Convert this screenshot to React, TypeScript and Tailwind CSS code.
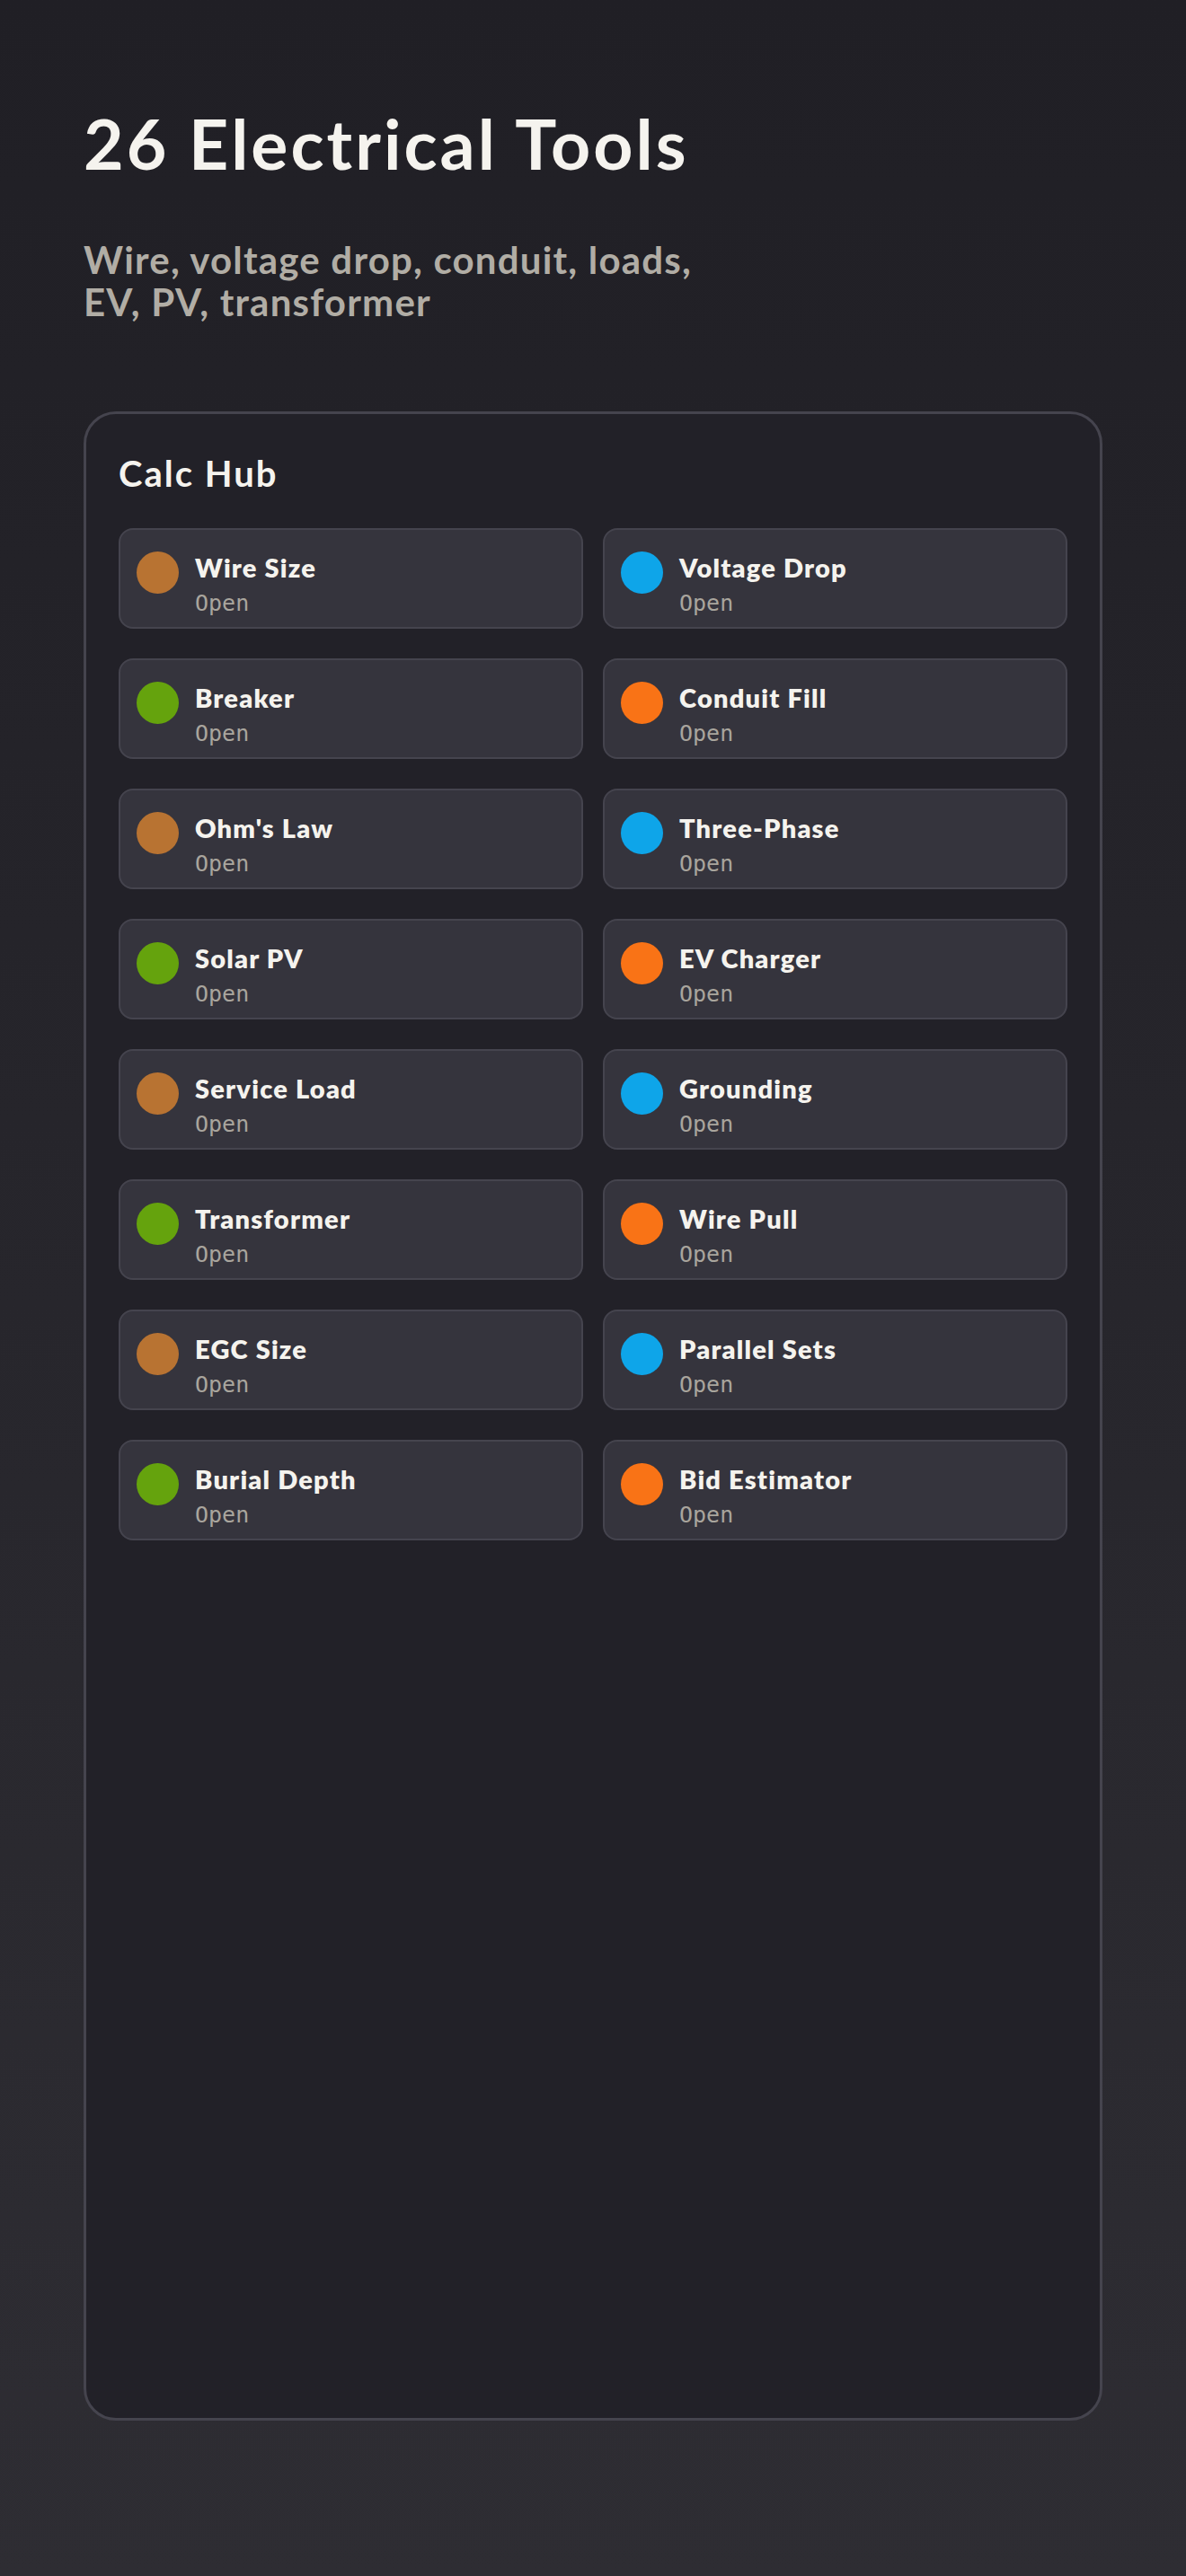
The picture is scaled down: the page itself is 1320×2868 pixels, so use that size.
const tools = [
  'Wire Size',
  'Voltage Drop',
  'Breaker',
  'Conduit Fill',
  "Ohm's Law",
  'Three-Phase',
  'Solar PV',
  'EV Charger',
  'Service Load',
  'Grounding',
  'Transformer',
  'Wire Pull',
  'EGC Size',
  'Parallel Sets',
  'Burial Depth',
  'Bid Estimator',
];

const dotColors = ['bg-[#b87332]', 'bg-[#0ea5e9]', 'bg-[#65a30d]', 'bg-[#f97316]'];

function ToolTile({ name, index }: { name: string; index: number }) {
  return (
    <button className="flex items-start gap-[18px] rounded-[16px] border-2 border-[#45444e] bg-[#35343d] pl-[18px] pr-4 pt-6 pb-[10px] text-left">
      <span className={`h-[47px] w-[47px] shrink-0 rounded-full ${dotColors[index % 4]}`} />
      <span className="flex flex-col">
        <span className="text-[29px] leading-[36px] font-extrabold tracking-[1.2px] text-[#f5f3ee]">{name}</span>
        <span className="mt-[6px] text-[25px] leading-[32px] text-[#a9a59d] font-['DejaVu_Sans_Mono',monospace]">
          Open
        </span>
      </span>
    </button>
  );
}

export default function App() {
  return (
    <div className="min-h-screen bg-gradient-to-b from-[#201f25] to-[#2e2d33] px-[93px] pt-[114px] pb-[173px] font-['Lato',sans-serif]">
      {/* Header */}
      <h1 className="text-[77px] leading-[91px] font-bold tracking-[3px] text-[#f5f3ee]">26 Electrical Tools</h1>
      <p className="mt-[61px] w-[720px] text-[42px] leading-[47px] font-bold tracking-[1.2px] text-[#b1ada5]">
        Wire, voltage drop, conduit, loads, EV, PV, transformer
      </p>

      {/* Calc Hub card */}
      <div className="mt-[98px] h-[2237px] rounded-[36px] border-[3px] border-[#45444e] bg-[#222128] px-9 pt-10">
        <h2 className="text-[40px] leading-[52px] font-bold tracking-[2px] text-[#f5f3ee]">Calc Hub</h2>
        <div className="mt-[35px] grid grid-cols-2 gap-x-[22px] gap-y-[33px]">
          {tools.map((t, i) => (
            <ToolTile key={t} name={t} index={i} />
          ))}
        </div>
      </div>
    </div>
  );
}
